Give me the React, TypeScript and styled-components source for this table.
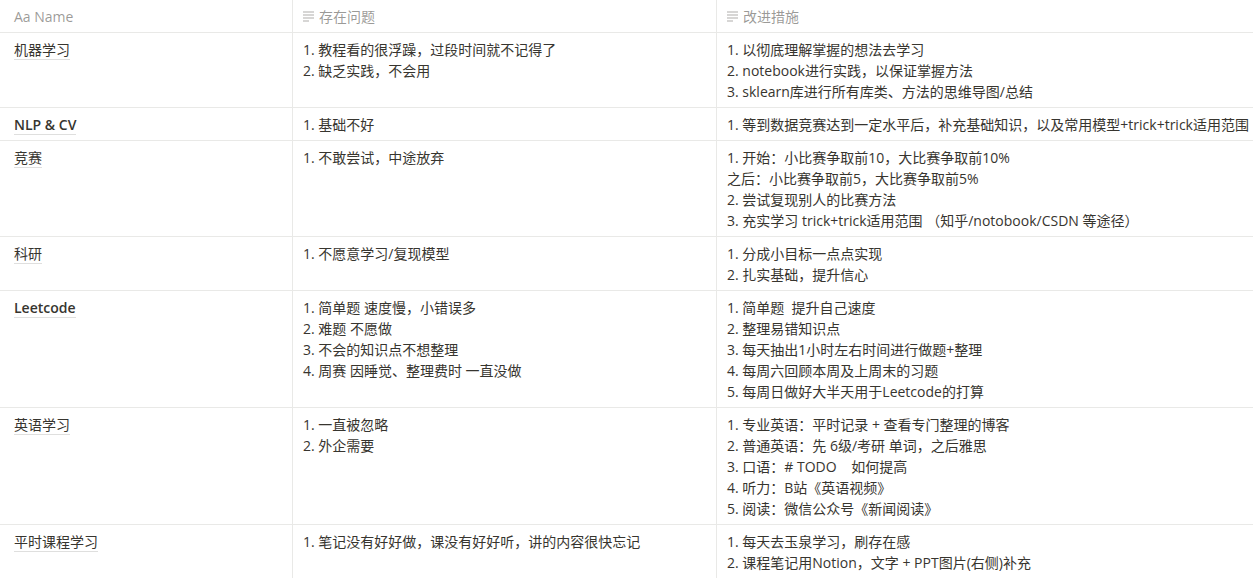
import React from "react";
import styled, { createGlobalStyle } from "styled-components";

const Global = createGlobalStyle`
  html, body { margin: 0; padding: 0; background: #ffffff; }
  body {
    font-family: "Segoe UI", "Open Sans", "Noto Sans CJK SC", sans-serif;
    color: rgb(55, 53, 47);
    -webkit-font-smoothing: antialiased;
  }
`;

const Table = styled.div`
  width: 1253px;
  overflow: hidden;
`;

const Row = styled.div`
  display: grid;
  grid-template-columns: 293px 424px 1fr;
  border-bottom: 1px solid rgb(233, 233, 231);
`;

const HeaderCell = styled.div<{ $first?: boolean; $last?: boolean }>`
  box-sizing: border-box;
  height: 32px;
  display: flex;
  align-items: center;
  gap: 5px;
  padding: 0 10px 0 ${(p) => (p.$first ? "14px" : "10px")};
  border-right: ${(p) => (p.$last ? "none" : "1px solid rgb(233, 233, 231)")};
  font-size: 14px;
  color: rgba(55, 53, 47, 0.5);
  white-space: nowrap;
`;

const Cell = styled.div<{ $first?: boolean; $last?: boolean }>`
  box-sizing: border-box;
  padding: 6px 10px 5px ${(p) => (p.$first ? "14px" : "10px")};
  border-right: ${(p) => (p.$last ? "none" : "1px solid rgb(233, 233, 231)")};
  font-size: 14px;
  line-height: 21px;
  white-space: nowrap;
  overflow: hidden;
`;

const Title = styled.span<{ $strong?: boolean }>`
  display: inline-block;
  line-height: 19px;
  font-weight: ${(p) => (p.$strong ? 600 : 400)};
  border-bottom: 1px solid rgba(55, 53, 47, 0.16);
  margin-top: 1px;
`;

const Line = styled.div`
  white-space: pre;
`;

const TextIcon = () => (
  <svg width="11" height="11" viewBox="0 0 11 11" style={{ marginTop: 1 }}>
    <g fill="rgba(55,53,47,0.4)">
      <rect x="0" y="0.5" width="11" height="1" />
      <rect x="0" y="3.5" width="11" height="1" />
      <rect x="0" y="6.5" width="11" height="1" />
      <rect x="0" y="9.5" width="6" height="1" />
    </g>
  </svg>
);

type RowData = { name: string; strong?: boolean; problems: string[]; fixes: string[] };

const rows: RowData[] = [
  {
    name: "机器学习",
    problems: ["1. 教程看的很浮躁，过段时间就不记得了", "2. 缺乏实践，不会用"],
    fixes: [
      "1. 以彻底理解掌握的想法去学习",
      "2. notebook进行实践，以保证掌握方法",
      "3. sklearn库进行所有库类、方法的思维导图/总结",
    ],
  },
  {
    name: "NLP & CV",
    strong: true,
    problems: ["1. 基础不好"],
    fixes: ["1. 等到数据竞赛达到一定水平后，补充基础知识，以及常用模型+trick+trick适用范围"],
  },
  {
    name: "竞赛",
    problems: ["1. 不敢尝试，中途放弃"],
    fixes: [
      "1. 开始：小比赛争取前10，大比赛争取前10%",
      "之后：小比赛争取前5，大比赛争取前5%",
      "2. 尝试复现别人的比赛方法",
      "3. 充实学习 trick+trick适用范围 （知乎/notobook/CSDN 等途径）",
    ],
  },
  {
    name: "科研",
    problems: ["1. 不愿意学习/复现模型"],
    fixes: ["1. 分成小目标一点点实现", "2. 扎实基础，提升信心"],
  },
  {
    name: "Leetcode",
    strong: true,
    problems: [
      "1. 简单题 速度慢，小错误多",
      "2. 难题 不愿做",
      "3. 不会的知识点不想整理",
      "4. 周赛 因睡觉、整理费时 一直没做",
    ],
    fixes: [
      "1. 简单题  提升自己速度",
      "2. 整理易错知识点",
      "3. 每天抽出1小时左右时间进行做题+整理",
      "4. 每周六回顾本周及上周末的习题",
      "5. 每周日做好大半天用于Leetcode的打算",
    ],
  },
  {
    name: "英语学习",
    problems: ["1. 一直被忽略", "2. 外企需要"],
    fixes: [
      "1. 专业英语：平时记录 + 查看专门整理的博客",
      "2. 普通英语：先 6级/考研 单词，之后雅思",
      "3. 口语：# TODO    如何提高",
      "4. 听力：B站《英语视频》",
      "5. 阅读：微信公众号《新闻阅读》",
    ],
  },
  {
    name: "平时课程学习",
    problems: ["1. 笔记没有好好做，课没有好好听，讲的内容很快忘记"],
    fixes: ["1. 每天去玉泉学习，刷存在感", "2. 课程笔记用Notion，文字 + PPT图片(右侧)补充"],
  },
];

const Lines = ({ items }: { items: string[] }) => (
  <>
    {items.map((t, i) => (
      <Line key={i}>{t}</Line>
    ))}
  </>
);

export default function App() {
  return (
    <>
      <Global />
      <Table>
        <Row>
          <HeaderCell $first>Aa Name</HeaderCell>
          <HeaderCell>
            <TextIcon />
            存在问题
          </HeaderCell>
          <HeaderCell $last>
            <TextIcon />
            改进措施
          </HeaderCell>
        </Row>
        {rows.map((r) => (
          <Row key={r.name}>
            <Cell $first>
              <Title $strong={r.strong}>{r.name}</Title>
            </Cell>
            <Cell>
              <Lines items={r.problems} />
            </Cell>
            <Cell $last>
              <Lines items={r.fixes} />
            </Cell>
          </Row>
        ))}
      </Table>
    </>
  );
}
